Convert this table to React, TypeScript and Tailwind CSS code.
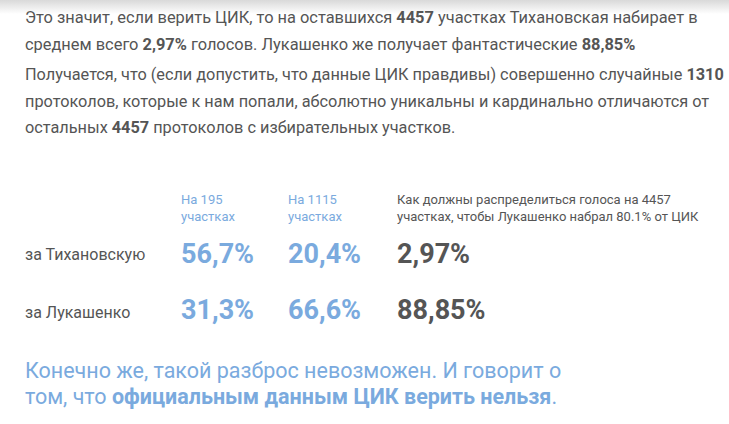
export default function App() {
  return (
    <div
      className="w-[729px] h-[424px] bg-white relative overflow-hidden text-[#555]"
      style={{ fontFamily: "Roboto, 'Noto Sans', sans-serif" }}
    >
      {/* top shadow strip */}
      <div className="absolute inset-x-0 top-0 h-[14px] bg-gradient-to-b from-[#d9d9d9] to-white" />

      <div className="relative pl-[25px] pt-[4px] whitespace-nowrap">
        <p className="text-[16.4px] leading-[27px]">
          Это значит, если верить ЦИК, то на оставшихся <b>4457</b> участках Тихановская набирает в
          <br />
          среднем всего <b>2,97%</b> голосов. Лукашенко же получает фантастические <b>88,85%</b>
        </p>
        <p className="mt-[4px] text-[16.3px] leading-[26.5px]">
          Получается, что (если допустить, что данные ЦИК правдивы) совершенно случайные <b>1310</b>
          <br />
          протоколов, которые к нам попали, абсолютно уникальны и кардинально отличаются от
          <br />
          остальных <b>4457</b> протоколов с избирательных участков.
        </p>

        {/* comparison table */}
        <div className="mt-[49px] grid grid-cols-[156px_107px_109px_1fr] items-center">
          <div />
          <div className="text-[13px] leading-[17px] text-[#7aaade]">
            На 195
            <br />
            участках
          </div>
          <div className="text-[13px] leading-[17px] text-[#7aaade]">
            На 1115
            <br />
            участках
          </div>
          <div className="text-[13px] leading-[17px]">
            Как должны распределиться голоса на 4457
            <br />
            участках, чтобы Лукашенко набрал 80.1% от ЦИК
          </div>

          <div className="mt-[11px] text-[16px] leading-[36px] translate-y-[1px]">за Тихановскую</div>
          <div className="mt-[11px] text-[27px] leading-[36px] font-bold text-[#7aaade]">56,7%</div>
          <div className="mt-[11px] text-[27px] leading-[36px] font-bold text-[#7aaade]">20,4%</div>
          <div className="mt-[11px] text-[27px] leading-[36px] font-bold">2,97%</div>

          <div className="mt-[20px] text-[16px] leading-[36px] translate-y-[3px]">за Лукашенко</div>
          <div className="mt-[20px] text-[27px] leading-[36px] font-bold text-[#7aaade]">31,3%</div>
          <div className="mt-[20px] text-[27px] leading-[36px] font-bold text-[#7aaade]">66,6%</div>
          <div className="mt-[20px] text-[27px] leading-[36px] font-bold">88,85%</div>
        </div>

        <p className="mt-[30px] text-[21.5px] leading-[26px] text-[#7aaade]">
          Конечно же, такой разброс невозможен. И говорит о
          <br />
          том, что <b>официальным данным ЦИК верить нельзя</b>.
        </p>
      </div>
    </div>
  );
}
